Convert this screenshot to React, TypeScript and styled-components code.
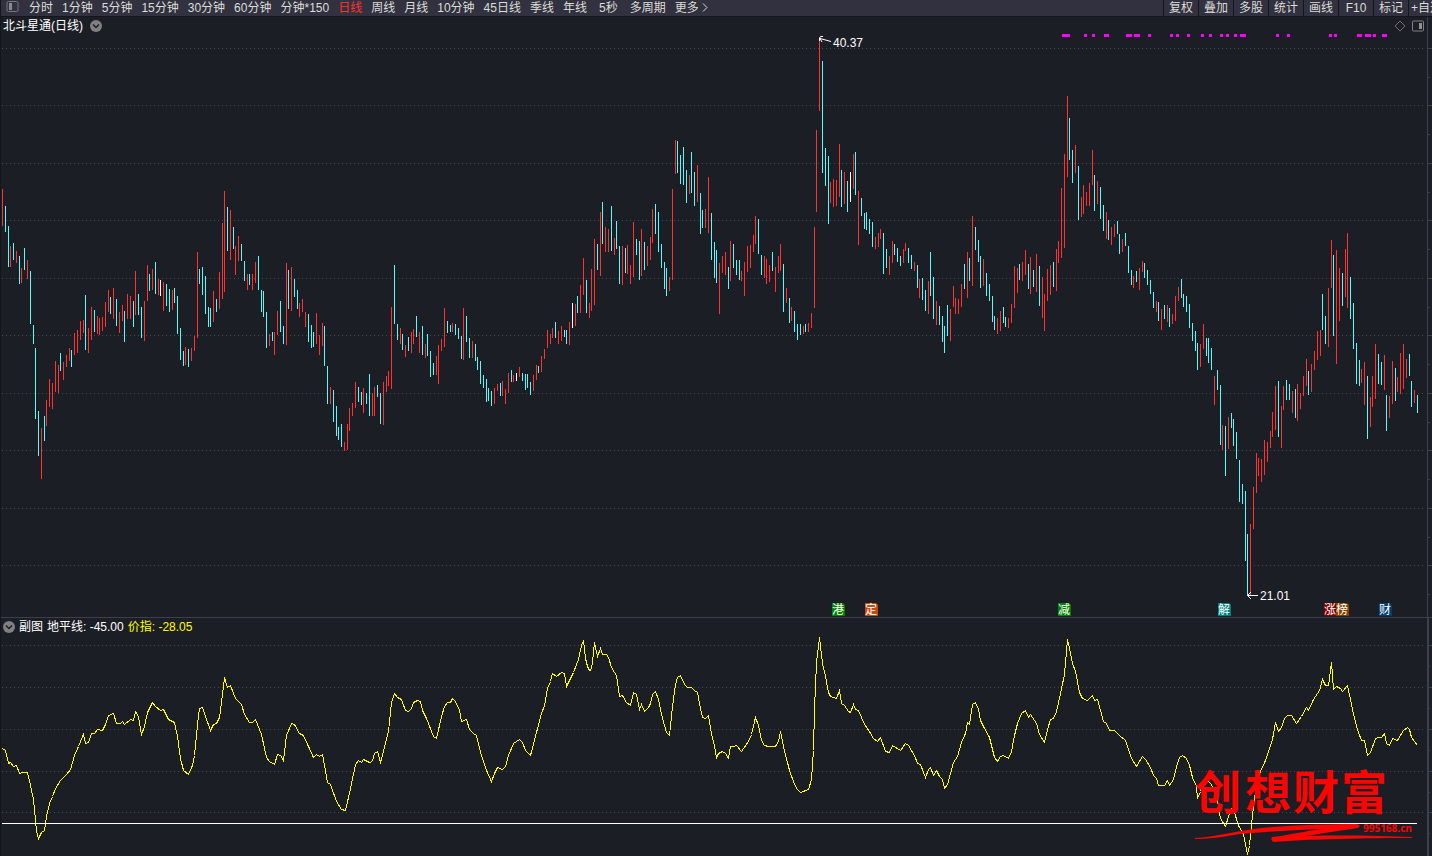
import React from "react";
import styled, { createGlobalStyle } from "styled-components";

const GlobalStyle = createGlobalStyle`
  * { box-sizing: border-box; }
  body {
    margin: 0;
    background: #1c1e26;
    color: #ffffff;
    font: 12px/14px "Liberation Sans", "Noto Sans CJK SC", sans-serif;
  }
  button { font: inherit; color: inherit; background: none; border: 0; padding: 0; cursor: pointer; }
`;

const Screen = styled.div`
  display: flex;
  flex-direction: column;
  height: 100vh;
  border-left: 1px solid #15161c;
  overflow: hidden;
`;

const Toolbar = styled.nav`
  display: flex;
  flex: none;
  height: 17px;
  background: #31313f;
  border-bottom: 1px solid #15161c;
  color: #dcdcd8;
  overflow: hidden;
`;

const Periods = styled.div`
  display: flex;
  flex: 1;
  align-items: center;
  gap: 9px;
  padding-left: 5px;
  min-width: 0;
  overflow: hidden;
`;

const PeriodButton = styled.button<{ $active?: boolean; $roomy?: boolean }>`
  flex: none;
  height: 14px;
  padding: 0 ${(p) => (p.$roomy ? 3 : 0)}px;
  color: ${(p) => (p.$active ? "#ff3232" : "inherit")};
  white-space: nowrap;
`;

const LayoutButton = styled.button`
  flex: none;
  display: flex;
  width: 14px;
  height: 14px;
`;

const Tools = styled.div`
  display: flex;
  flex: none;
`;

const ToolButton = styled.button<{ $last?: boolean }>`
  width: ${(p) => (p.$last ? 24 : 35)}px;
  height: 16px;
  padding: 0 ${(p) => (p.$last ? 2 : 0)}px;
  border-left: 1px solid #15161c;
  text-align: ${(p) => (p.$last ? "left" : "center")};
  white-space: nowrap;
  overflow: hidden;
`;

const Panel = styled.section<{ $share: number }>`
  display: grid;
  flex: ${(p) => p.$share} 1 0;
  min-height: 0;
  grid-template: minmax(0, 1fr) / minmax(0, 1fr) 5px;
`;

const Plot = styled.svg`
  grid-area: 1 / 1;
  display: block;
  width: 100%;
  height: 100%;
`;

const Axis = styled.svg`
  grid-area: 1 / 2;
  display: block;
  width: 5px;
  height: 100%;
`;

const PanelHeader = styled.header<{ $gap: number }>`
  grid-area: 1 / 1;
  align-self: start;
  z-index: 1;
  display: flex;
  align-items: center;
  gap: ${(p) => p.$gap}px;
  height: 18px;
  padding: 0 3px 0 2px;
`;

const Title = styled.h1`
  margin: 0;
  font: inherit;
`;

const Reading = styled.span<{ $yellow?: boolean }>`
  color: ${(p) => (p.$yellow ? "#ffff00" : "#ffffff")};
  white-space: pre;
`;

const RoundButton = styled.button`
  display: flex;
  width: 12px;
  height: 12px;
`;

const HeaderTools = styled.div`
  display: flex;
  gap: 6px;
  margin-left: auto;
`;

const Divider = styled.div`
  flex: none;
  height: 1px;
  background: #3c404a;
`;

const COLORS: Record<string, string> = { r: "#ff3232", c: "#54fcfc", w: "#ffffff" };

/* One token per bar: colour, x, high, low. */
const BARS = `
r2,189,226 c5,206,232 c8,226,267 r10,246,267 c13,243,260 r16,251,263 c19,256,284 r21,268,283 c24,248,270 r27,260,279
c30,271,324 c33,325,344 c35,348,419 c38,411,456 r41,428,479 c44,416,441 r46,400,426 r49,379,407 r52,383,409 r55,361,392
r58,365,393 c60,353,371 r63,362,380 r66,355,367 r69,348,361 c71,350,367 r74,333,355 r77,330,353 r80,321,340 r83,320,333
c85,295,350 r88,328,353 r91,307,340 c94,310,332 r97,316,334 r99,318,335 r102,317,331 r105,302,327 r108,290,312 c110,297,314
r113,288,319 c116,299,326 r119,312,333 r122,305,321 c124,311,342 r127,294,319 r130,296,319 c133,301,327 r135,271,315 c138,294,315
c141,307,338 r144,301,341 r147,265,301 c149,274,291 r152,269,290 c155,262,294 r158,279,295 w160,280,296 r163,282,311 c166,284,306
c169,289,312 r172,290,310 c174,288,303 c177,296,334 c180,328,360 c183,351,366 r185,347,365 c188,349,367 r191,348,361 r194,336,351
r197,252,338 c199,269,284 c202,267,295 c205,276,314 c208,307,327 c210,308,327 r213,291,322 c216,299,312 r219,272,309 r222,223,299
r224,191,292 c227,207,251 r230,210,260 c233,227,249 r235,246,275 r238,236,261 c241,244,261 c244,261,281 r247,274,290 c249,274,285
r252,274,290 r255,262,283 c258,256,290 c261,290,312 c263,291,317 c266,312,348 r269,334,346 c272,332,341 r274,332,355 r277,311,335
c280,301,332 c283,326,344 r286,263,345 c288,270,309 r291,267,311 c294,279,297 c297,290,309 r299,303,317 r302,299,312 r305,312,327
c308,314,342 c311,325,348 c313,332,347 r316,313,344 r319,335,355 r322,323,346 c324,326,366 c327,366,404 r330,387,404 c333,390,422
c336,406,436 c338,427,440 c341,424,447 r344,442,451 r347,424,450 r349,408,431 r352,403,416 r355,382,408 c358,387,402 c361,392,405
r363,388,413 c366,393,404 c369,374,416 r372,393,416 r374,387,416 c377,385,397 c380,393,424 r383,382,425 r386,376,392 r388,371,386
r391,307,389 c394,265,324 c397,324,340 r400,328,344 c402,334,350 r405,345,357 c408,337,351 r411,332,353 r413,329,344 c416,316,337
r419,332,353 c422,326,355 r425,344,358 c427,334,356 c430,351,377 c433,363,375 r436,356,375 r438,345,384 r441,339,351 r444,308,347
c447,321,333 c450,325,332 r452,323,332 c455,324,335 c458,328,339 c461,336,359 r463,308,360 c466,316,342 c469,338,358 r472,341,358
c475,344,361 c477,357,370 c480,361,384 c483,375,388 c486,379,402 c488,388,401 c491,391,406 r494,388,404 r497,384,391 c500,383,396
r502,381,396 r505,389,404 r508,373,393 c511,370,382 r513,375,382 w516,373,381 r519,367,377 c522,373,381 c525,374,390 c527,374,388
c530,382,395 r533,375,391 r536,365,380 c538,366,373 r541,356,372 r544,349,359 r547,330,348 r550,334,344 r552,328,338 c555,322,338
r558,331,344 r561,326,341 c564,330,337 c566,330,344 r569,322,345 w572,303,328 r575,304,326 c577,296,313 r580,285,313 r583,258,295
c586,280,313 r589,303,318 r591,269,311 r594,239,305 c597,244,270 r600,212,276 c602,202,244 r605,227,252 r608,229,252 c611,206,251
r614,238,255 c616,221,249 c619,246,284 r622,246,285 c625,248,273 r627,245,274 r630,265,284 r633,222,277 c636,239,255 c639,241,280
r641,229,276 c644,242,270 r647,246,266 r650,237,260 r652,209,243 c655,204,234 c658,212,252 c661,244,268 c664,262,289 c666,268,296
r669,277,291 r672,189,280 r675,140,174 c677,141,173 c680,155,184 c683,147,185 c686,170,203 r689,175,194 c691,152,193 c694,172,206
r697,165,202 c700,193,234 c702,210,228 r705,209,228 r708,177,233 c711,213,260 c714,242,278 c716,250,283 r719,263,314 r722,256,273
r725,252,275 c728,267,289 r730,241,281 c733,244,268 c736,260,275 c739,260,280 r741,271,281 r744,262,296 r747,246,272 r750,245,268
r753,235,252 r755,216,244 c758,219,254 c761,255,275 r764,256,278 r766,259,284 r769,265,282 c772,252,271 r775,267,292 r778,256,273
r780,244,271 c783,264,312 r786,288,303 c789,298,323 r791,307,321 c794,311,332 c797,324,340 c800,324,335 r803,326,334 c805,324,332
r808,323,332 r811,313,328 r814,227,308 r816,130,212 r819,39,111 c822,61,173 c825,148,186 c828,156,224 r830,182,203 r833,179,207
r836,180,206 r839,144,197 c841,170,207 r844,172,204 c847,181,212 w850,172,202 r853,154,189 c855,152,195 r858,191,245 c861,198,216
c864,213,229 c866,212,230 c869,219,234 c872,222,247 r875,237,249 r878,233,247 r880,229,239 c883,233,274 c886,249,268 r889,256,275
r892,241,263 c894,244,255 c897,248,262 c900,256,266 r903,249,263 r905,243,251 c908,248,263 c911,255,269 r914,262,271 c917,265,288
r919,279,298 c922,278,300 c925,290,311 r928,281,314 c930,252,296 c933,277,319 r936,301,325 c939,306,325 c942,316,342 c944,326,353
c947,305,336 r950,309,341 r953,286,307 r955,298,314 r958,299,314 r961,284,307 c964,264,289 r967,252,298 c969,258,281 r972,216,286
c975,227,250 c978,240,262 c980,256,288 r983,259,286 c986,273,296 c989,284,301 c992,296,322 c994,316,330 r997,318,334 r1000,311,331
c1003,307,323 c1005,317,327 r1008,318,328 r1011,304,323 r1014,266,308 r1017,268,293 c1019,264,280 r1022,262,281 r1025,250,275 c1028,264,289
r1030,257,294 c1033,270,287 r1036,254,292 c1039,266,306 r1042,277,318 r1044,294,331 r1047,269,301 r1050,265,295 c1053,262,287 r1056,249,291
r1058,241,263 r1061,188,258 r1064,154,248 r1067,96,177 c1069,118,160 c1072,150,183 r1075,145,173 c1078,166,220 r1081,197,217 r1083,185,214
r1086,192,206 r1089,183,206 r1092,150,185 c1094,175,211 r1097,181,204 c1100,187,219 c1103,205,231 r1106,212,239 c1108,220,240 r1111,227,245
r1114,224,237 c1117,221,234 c1119,234,254 r1122,239,252 c1125,233,246 c1128,246,273 c1131,270,285 r1133,276,288 c1136,271,282 r1139,268,290
r1142,261,272 c1144,263,278 c1147,270,285 c1150,280,294 c1153,292,308 r1156,301,312 c1158,302,321 r1161,309,330 c1164,305,319 r1167,305,322
c1169,308,327 r1172,314,324 r1175,296,321 r1178,287,301 c1181,279,298 c1183,294,307 c1186,296,312 c1189,304,328 c1192,323,341 c1195,331,351
c1197,343,370 r1200,344,367 r1203,324,349 c1206,338,356 c1208,338,363 c1211,348,370 r1214,376,405 c1217,370,390 c1220,385,445 r1222,425,450
c1225,426,476 r1228,417,449 c1231,413,428 c1233,419,446 c1236,432,459 c1239,460,502 c1242,484,504 c1245,491,561 c1247,534,595 r1250,524,595
r1253,487,529 r1256,453,493 r1258,458,476 r1261,459,482 r1264,440,475 r1267,442,462 r1270,431,448 r1272,412,437 r1275,386,430 c1278,381,437
r1281,406,448 r1283,386,410 c1286,380,400 c1289,384,400 r1292,391,413 c1295,389,418 r1297,384,421 r1300,393,409 r1303,376,396 r1306,359,386
c1308,371,395 r1311,364,392 r1314,351,370 r1317,331,360 r1320,330,356 c1322,294,330 c1325,316,344 r1328,288,347 r1331,240,288 c1333,255,336
r1336,250,364 r1339,268,321 c1342,273,306 r1345,249,297 r1347,233,308 c1350,277,319 c1353,303,349 c1356,343,384 c1359,360,386 r1361,369,383
r1364,362,405 c1367,376,439 r1370,397,427 r1372,376,407 r1375,344,399 c1378,354,384 c1381,362,385 r1384,355,390 c1386,395,431 r1389,396,418
r1392,361,404 c1395,368,401 r1397,377,392 r1400,353,394 r1403,344,389 r1406,359,378 c1409,354,376 c1411,381,407 r1414,390,403 c1417,395,413
`
  .trim()
  .split(/\s+/)
  .map((token) => {
    const [x, high, low] = token.slice(1).split(",").map(Number);
    return { color: COLORS[token[0]], x, high, low };
  });

const INDEX_LINE = `
2,748 5,750 8,763 10,762 13,766 16,765 19,773 22,772 27,772 30,785 33,799 35,820 36,831 38,838 41,832 44,830 46,816 49,803
52,796 55,788 60,780 66,774 70,769 74,755 78,746 82,736 83,734 85,743 88,742 91,733 94,733 97,729 102,730 105,724 108,715
113,713 116,723 120,723 122,721 124,724 130,719 133,720 135,711 138,716 141,734 144,726 147,712 152,702 155,706 160,710
163,709 168,719 174,722 177,736 180,758 183,770 188,774 192,765 194,755 197,724 199,708 202,707 205,716 210,730 213,724
216,723 219,717 222,694 224,677 227,687 230,685 235,698 241,704 244,714 249,722 252,722 255,719 261,734 266,757 269,761
274,764 277,754 280,755 283,760 286,735 291,723 294,724 299,733 303,735 308,746 313,757 316,754 319,756 322,754 324,765
327,782 330,784 336,801 341,809 345,810 350,788 355,764 358,760 361,762 363,759 369,762 372,761 374,753 377,751 380,762
385,743 388,731 391,702 394,693 397,697 401,699 405,710 408,711 411,708 413,702 417,700 420,701 422,710 426,718 433,736
436,738 441,716 444,706 447,702 450,702 452,698 455,701 459,710 461,721 466,719 469,729 473,733 476,735 480,752 486,770
491,781 494,773 497,767 502,769 505,766 508,755 513,743 519,739 522,742 525,750 530,755 536,732 541,713 544,705 547,688
550,681 552,673 556,676 561,672 564,673 566,686 569,680 573,672 578,659 581,645 583,640 585,658 587,666 589,670 591,669
593,652 594,642 597,656 600,648 602,654 606,654 608,657 611,667 614,672 616,675 619,696 622,695 626,702 630,705 633,692
636,694 639,709 641,704 644,711 648,707 650,703 652,694 655,691 658,699 661,714 666,732 669,735 672,706 675,684 677,677
680,675 684,684 687,687 691,687 694,690 697,692 700,708 702,717 705,718 708,715 711,733 714,746 716,757 718,753 722,751
725,753 728,758 730,746 733,746 736,745 741,751 748,741 751,734 755,717 758,725 761,740 764,745 768,746 775,746 778,741
780,731 783,746 789,770 794,784 797,789 800,792 808,789 811,779 813,750 814,708 816,662 819,637 822,663 825,676 828,692
830,696 836,698 839,690 841,703 844,705 848,711 850,712 853,704 855,709 858,710 864,724 869,731 873,738 877,741 880,737
885,751 889,752 892,745 900,750 905,743 908,745 914,755 917,763 920,764 925,777 928,769 930,767 933,775 936,770 939,776
942,779 944,788 947,784 950,773 953,762 957,756 961,742 965,733 967,722 969,724 972,704 975,702 978,709 980,720 983,726
989,737 994,757 997,761 1000,756 1003,755 1008,758 1011,751 1014,735 1017,723 1021,713 1025,710 1028,717 1030,714 1036,723
1039,734 1044,742 1047,729 1050,719 1053,718 1056,711 1060,693 1064,674 1067,639 1069,648 1072,663 1075,671 1079,692
1082,698 1087,700 1092,695 1094,700 1097,699 1100,710 1103,721 1106,723 1109,730 1114,730 1119,735 1125,740 1131,758
1136,766 1139,761 1142,756 1145,759 1150,767 1153,775 1156,778 1158,785 1164,785 1167,780 1169,785 1173,779 1176,766
1179,757 1182,755 1186,758 1189,765 1192,777 1196,786 1197,798 1200,791 1203,779 1207,780 1211,784 1217,800 1220,818
1225,826 1228,816 1231,808 1234,812 1238,825 1243,834 1247,854 1249,845 1252,815 1256,783 1260,771 1265,760 1270,745
1272,739 1275,722 1278,731 1281,727 1284,718 1287,715 1291,715 1296,723 1301,716 1306,707 1308,710 1313,699 1319,690
1322,679 1325,685 1328,685 1331,662 1333,689 1336,686 1340,688 1342,691 1347,685 1350,699 1353,714 1357,729 1361,740
1364,740 1367,755 1370,752 1375,738 1378,737 1381,737 1384,733 1386,743 1389,745 1392,738 1397,740 1403,730 1407,727
1409,729 1411,737 1417,745
`.trim();

/* Signal marks above the bars: x and width. */
const SIGNALS = [
  [1062, 8], [1084, 3], [1092, 3], [1104, 5], [1126, 6], [1134, 6], [1148, 3], [1170, 3],
  [1176, 3], [1187, 3], [1201, 3], [1209, 3], [1220, 3], [1226, 3], [1234, 3], [1240, 6],
  [1276, 3], [1287, 3], [1329, 3], [1334, 3], [1357, 5], [1365, 6], [1373, 3], [1382, 5],
];

const EVENTS = [
  { x: 832, label: "港", fill: "#008000" },
  { x: 865, label: "定", fill: "#c04c10" },
  { x: 1058, label: "减", fill: "#008000" },
  { x: 1218, label: "解", fill: "#008080" },
  { x: 1324, label: "涨", fill: "#800000" },
  { x: 1336, label: "榜", fill: "#804000" },
  { x: 1379, label: "财", fill: "#003c70" },
];

const PRICE_GRID = [48, 105, 163, 220, 278, 335, 393, 450, 508, 565];
const INDEX_GRID = [645, 687, 729, 771, 812];

const PERIODS = [
  "分时", "1分钟", "5分钟", "15分钟", "30分钟", "60分钟", "分钟*150", "日线", "周线",
  "月线", "10分钟", "45日线", "季线", "年线", "5秒", "多周期",
];
const TOOLS = ["复权", "叠加", "多股", "统计", "画线", "F10", "标记", "+自选"];

function GridLines({ rows }: { rows: number[] }) {
  return (
    <g stroke="#444853" strokeDasharray="1 3" shapeRendering="crispEdges">
      {rows.map((y) => (
        <line key={y} x1={2} x2={1424} y1={y + 0.5} y2={y + 0.5} />
      ))}
    </g>
  );
}

function AxisTicks({ rows, top, height, half, wide }: {
  rows: number[]; top: number; height: number; half: number; wide: number;
}) {
  return (
    <Axis viewBox={`0 ${top} 5 ${height}`} preserveAspectRatio="none" shapeRendering="crispEdges" aria-hidden="true">
      <rect x={0} y={top} width={wide} height={height} fill="#3a4150" />
      {rows.map((y) => (
        <g key={y} fill="#3a4150">
          <rect x={1} y={y} width={4} height={1} />
          <rect x={1} y={y + half} width={2} height={1} />
        </g>
      ))}
    </Axis>
  );
}

function ChevronDisc() {
  return (
    <svg width="12" height="12" viewBox="0 0 12 12" aria-hidden="true">
      <circle cx="6" cy="6" r="6" fill="#808080" />
      <path d="M3 4.5 6 7.5 9 4.5" fill="none" stroke="#1c1e26" strokeWidth="1.5" />
    </svg>
  );
}

function PriceChart() {
  return (
    <Plot viewBox="1 17 1426 600" preserveAspectRatio="none" role="img" aria-label="北斗星通 日线">
      <GridLines rows={PRICE_GRID} />
      <g shapeRendering="crispEdges">
        {BARS.map((b) => (
          <rect key={b.x} x={b.x} y={b.high} width={1} height={b.low - b.high} fill={b.color} />
        ))}
        {SIGNALS.map(([x, w]) => (
          <rect key={x} x={x} y={34} width={w} height={3} fill="#ff00ff" />
        ))}
      </g>
      <g fill="none" stroke="#ffffff">
        <path d="M831 41.500 820 38.500 M823 36.500H820.500L819.500 38V41 M820 38.500 822 42" />
        <path d="M1258 595.500H1247.500 M1251 592 1247.500 595.500 1251 599" />
      </g>
      <g fill="#ffffff" fontSize="12">
        <text x="833" y="47">40.37</text>
        <text x="1260" y="600">21.01</text>
      </g>
      {EVENTS.map((e) => (
        <g key={e.x}>
          <path d={`M${e.x} 603h11l2 2v11h-13z`} fill={e.fill} />
          <text x={e.x + 6} y={614} fontSize="12" fill="#ffffff" textAnchor="middle">{e.label}</text>
        </g>
      ))}
    </Plot>
  );
}

function IndexChart() {
  return (
    <Plot viewBox="1 618 1426 238" preserveAspectRatio="none" role="img" aria-label="副图">
      <GridLines rows={INDEX_GRID} />
      <g shapeRendering="crispEdges">
        <polyline points={INDEX_LINE} transform="translate(0.5 0.5)" fill="none" stroke="#ffff00" />
        <rect x={2} y={823} width={1415} height={1} fill="#ffffff" />
      </g>
      <g fill="#fa0500">
        <g fontSize="46" fontWeight="bold">
          <text x="1195" y="809">创</text>
          <text x="1245" y="809">想</text>
          <text x="1293" y="809">财</text>
          <text x="1341" y="809">富</text>
        </g>
        <path d="M1195 838C1215 837 1235 831 1262 828C1290 825 1330 824 1356 824Q1362 825 1358 828C1340 831 1322 833 1306 836C1345 835 1380 836 1412 837V838C1370 838 1310 839 1274 842Q1270 841 1272 837C1290 835 1305 831 1322 829C1290 830 1265 832 1240 834C1225 837 1205 839 1195 839Z" />
        <text x="1363" y="832" fontFamily="'Open Sans', sans-serif" fontSize="10" fontWeight="bold">995168.cn</text>
      </g>
    </Plot>
  );
}

export default function App() {
  return (
    <Screen>
      <GlobalStyle />
      <Toolbar>
        <Periods>
          <LayoutButton aria-label="布局">
            <svg width="14" height="14" viewBox="0 0 14 14" aria-hidden="true">
              <rect x="1" y="0.500" width="11" height="10" rx="1.500" fill="none" stroke="#777780" />
              <rect x="3" y="2" width="3" height="7" fill="#8a8a90" />
            </svg>
          </LayoutButton>
          {PERIODS.map((p) => (
            <PeriodButton key={p} $active={p === "日线"} $roomy={p === "5秒"}>{p}</PeriodButton>
          ))}
          <PeriodButton>
            更多{" "}
            <svg width="6" height="9" viewBox="0 0 6 9" aria-hidden="true">
              <path d="M1 0.500 5 4.500 1 8.500" fill="none" stroke="#dcdcd8" />
            </svg>
          </PeriodButton>
        </Periods>
        <Tools>
          {TOOLS.map((t, i) => (
            <ToolButton key={t} $last={i === TOOLS.length - 1}>{t}</ToolButton>
          ))}
        </Tools>
      </Toolbar>

      <Panel $share={600}>
        <PanelHeader $gap={7}>
          <Title>北斗星通(日线)</Title>
          <RoundButton aria-label="股票菜单"><ChevronDisc /></RoundButton>
          <HeaderTools>
            <RoundButton aria-label="标记点">
              <svg width="12" height="12" viewBox="0 0 12 12" aria-hidden="true">
                <path d="M6 1 11 6 6 11 1 6Z" fill="none" stroke="#707070" />
              </svg>
            </RoundButton>
            <RoundButton aria-label="侧栏">
              <svg width="12" height="12" viewBox="0 0 12 12" aria-hidden="true">
                <rect x="0.500" y="1" width="11" height="10" rx="1" fill="none" stroke="#808080" />
                <rect x="7" y="3" width="3" height="6" fill="#909090" />
              </svg>
            </RoundButton>
          </HeaderTools>
        </PanelHeader>
        <PriceChart />
        <AxisTicks rows={PRICE_GRID} top={17} height={600} half={29} wide={1} />
      </Panel>

      <Divider />

      <Panel $share={238}>
        <PanelHeader $gap={4}>
          <RoundButton aria-label="指标菜单"><ChevronDisc /></RoundButton>
          <Reading>副图</Reading>
          <Reading>地平线: -45.00</Reading>
          <Reading $yellow>价指: -28.05</Reading>
        </PanelHeader>
        <IndexChart />
        <AxisTicks rows={INDEX_GRID} top={618} height={238} half={21} wide={2} />
      </Panel>
    </Screen>
  );
}
